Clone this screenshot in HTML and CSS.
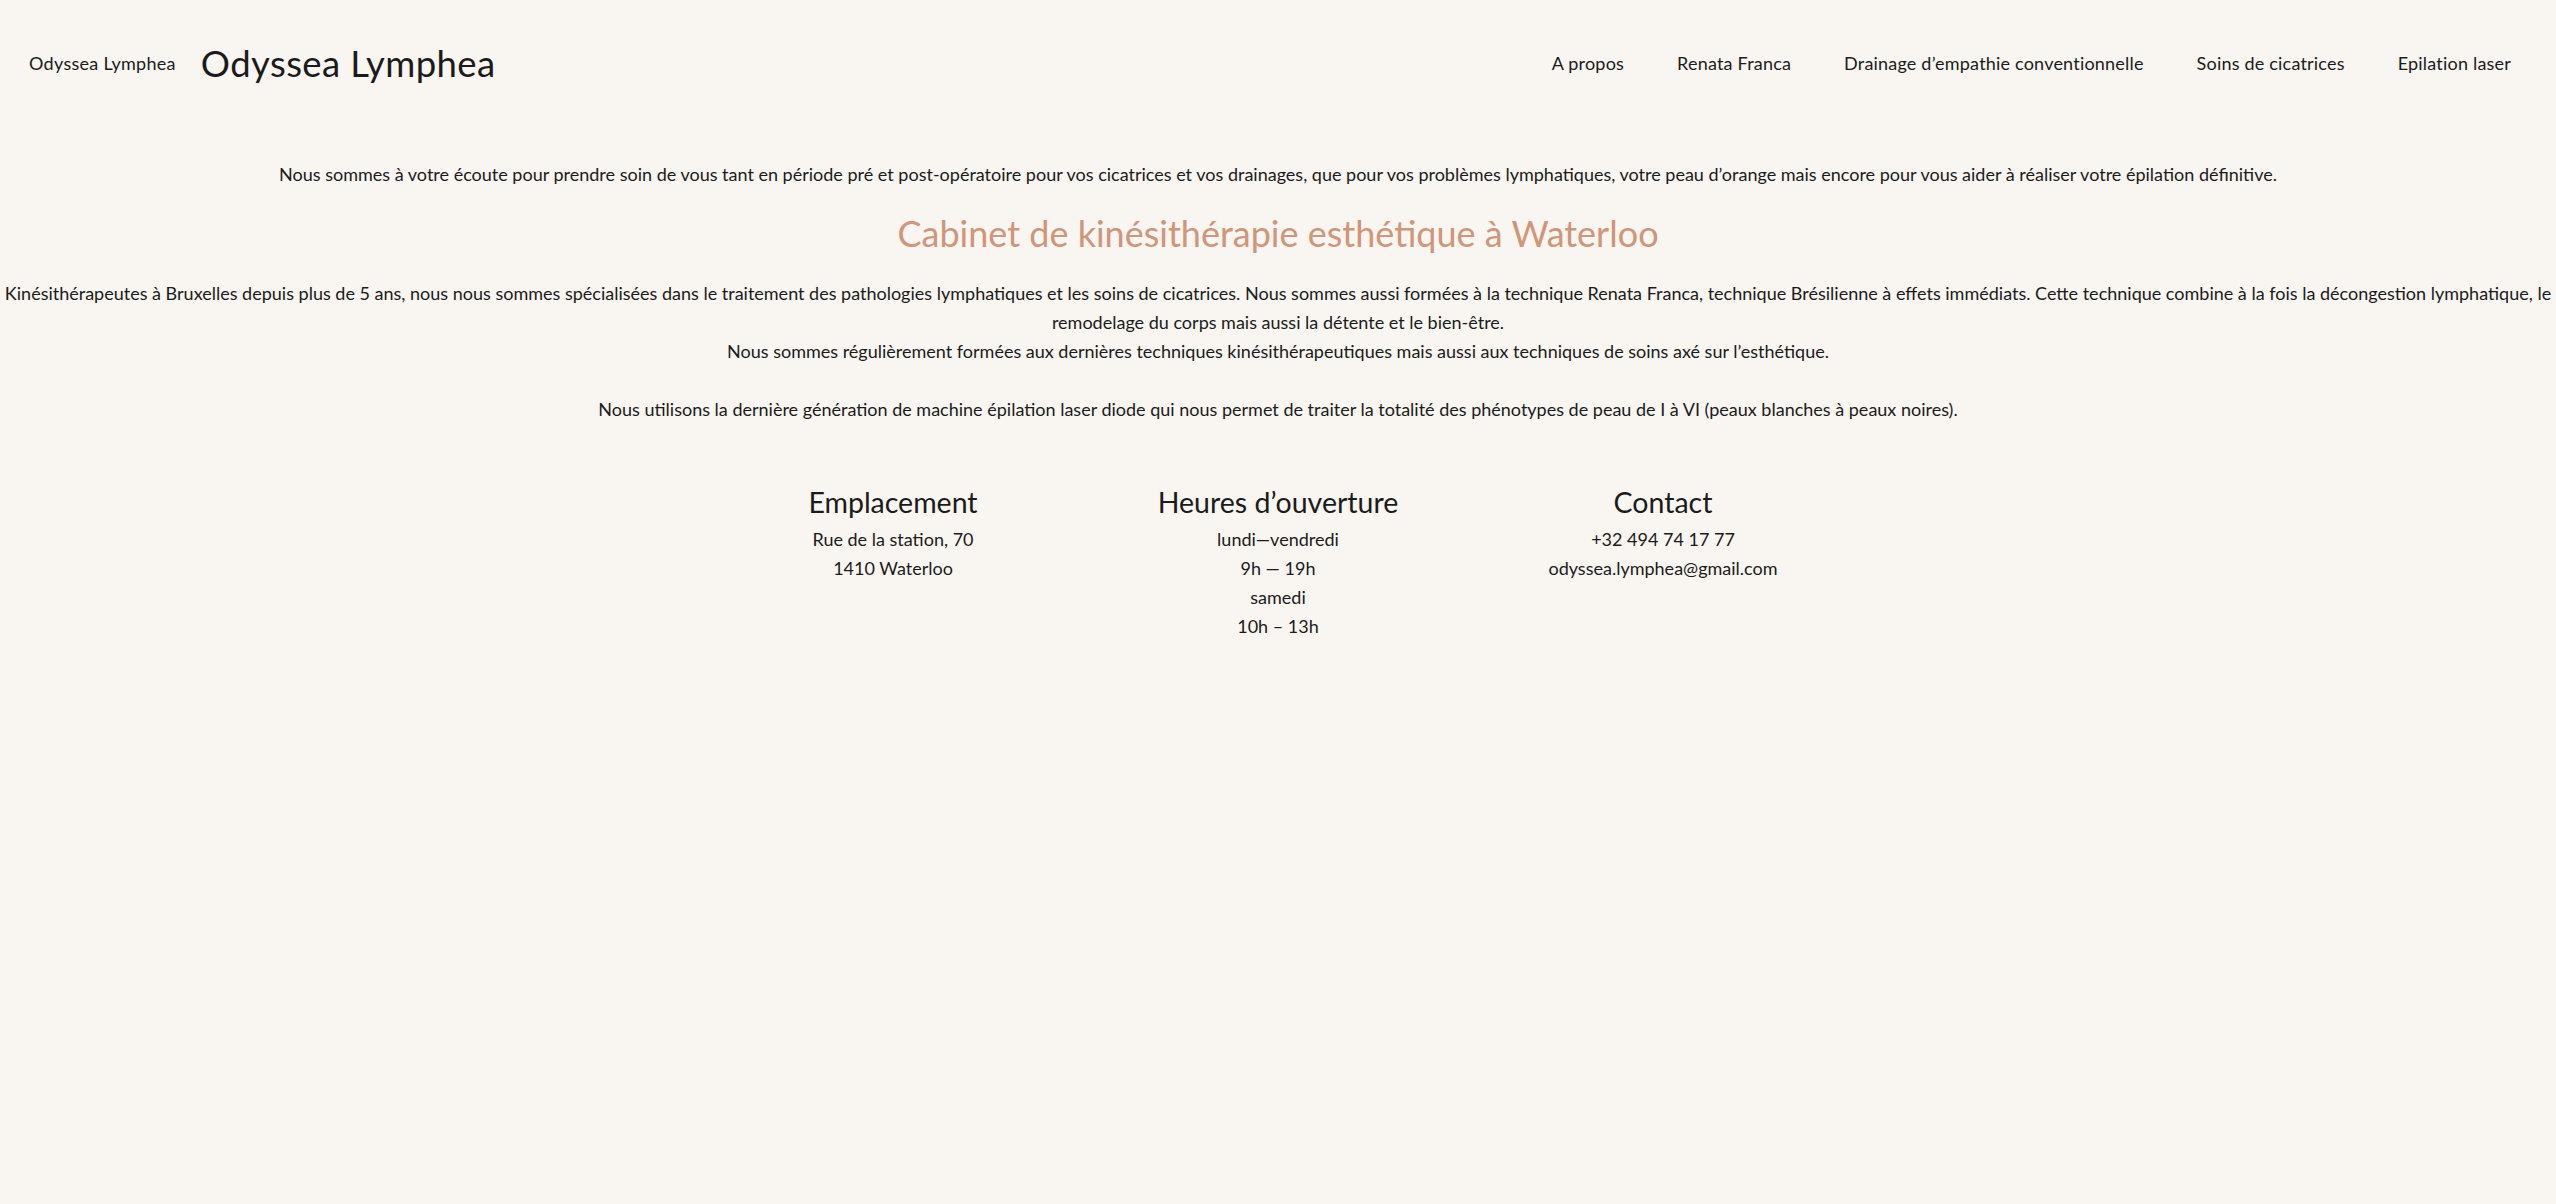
FILE: index.html
```html
<!DOCTYPE html>
<html lang="fr">
<head>
<meta charset="utf-8">
<title>Odyssea Lymphea</title>
<link rel="stylesheet" href="styles.css">
</head>
<body>
<header class="site-header">
  <div class="brand">
    <span class="brand-small">Odyssea Lymphea</span>
    <span class="brand-large">Odyssea Lymphea</span>
  </div>
  <nav class="nav">
    <a href="#">A propos</a>
    <a href="#">Renata Franca</a>
    <a href="#">Drainage d’empathie conventionnelle</a>
    <a href="#">Soins de cicatrices</a>
    <a href="#">Epilation laser</a>
  </nav>
</header>
<main class="content">
  <p class="intro">Nous sommes à votre écoute pour prendre soin de vous tant en période pré et post-opératoire pour vos cicatrices et vos drainages, que pour vos problèmes lymphatiques, votre peau d’orange mais encore pour vous aider à réaliser votre épilation définitive.</p>
  <h1 class="title">Cabinet de kinésithérapie esthétique à Waterloo</h1>
  <p class="body-text">Kinésithérapeutes à Bruxelles depuis plus de 5 ans, nous nous sommes spécialisées dans le traitement des pathologies lymphatiques et les soins de cicatrices. Nous sommes aussi formées à la technique Renata Franca, technique Brésilienne à effets immédiats. Cette technique combine à la fois la décongestion lymphatique, le remodelage du corps mais aussi la détente et le bien-être.<br>Nous sommes régulièrement formées aux dernières techniques kinésithérapeutiques mais aussi aux techniques de soins axé sur l’esthétique.<br><br>Nous utilisons la dernière génération de machine épilation laser diode qui nous permet de traiter la totalité des phénotypes de peau de I à VI (peaux blanches à peaux noires).</p>
  <section class="info">
    <div class="info-col">
      <h2>Emplacement</h2>
      <p>Rue de la station, 70<br>1410 Waterloo</p>
    </div>
    <div class="info-col">
      <h2>Heures d’ouverture</h2>
      <p>lundi—vendredi<br>9h — 19h<br>samedi<br>10h – 13h</p>
    </div>
    <div class="info-col">
      <h2>Contact</h2>
      <p>+32 494 74 17 77<br>odyssea.lymphea@gmail.com</p>
    </div>
  </section>
</main>
</body>
</html>
```
FILE: styles.css
```css
html, body {
  margin: 0;
  padding: 0;
}
body {
  background: #f9f5f0;
  color: #1b1b1b;
  font-family: Lato, "Liberation Sans", sans-serif;
  font-size: 18px;
  line-height: 29px;
}
.site-header {
  display: flex;
  align-items: center;
  justify-content: space-between;
  height: 126px;
  padding: 0 45px 0 29px;
}
.brand {
  display: flex;
  align-items: center;
  gap: 25px;
}
.brand-small {
  font-size: 18px;
  letter-spacing: 0.3px;
}
.brand-large {
  font-size: 36.5px;
  line-height: 44px;
  letter-spacing: 0.4px;
}
.nav {
  display: flex;
  gap: 53px;
}
.nav a {
  color: #1b1b1b;
  text-decoration: none;
  font-size: 18px;
  letter-spacing: 0.2px;
}
.content {
  text-align: center;
  padding-top: 34px;
}
.intro {
  margin: 0;
}
.title {
  margin: 22px 0 0;
  font-weight: 400;
  font-size: 36px;
  line-height: 44px;
  color: #cf967a;
}
.body-text {
  margin: 24px 0 0;
}
.info {
  display: grid;
  grid-template-columns: repeat(3, 385px);
  justify-content: center;
  margin-top: 59px;
}
.info-col h2 {
  margin: 0 0 4px;
  font-weight: 400;
  font-size: 28.5px;
  line-height: 38px;
}
.info-col p {
  margin: 0;
}
```
